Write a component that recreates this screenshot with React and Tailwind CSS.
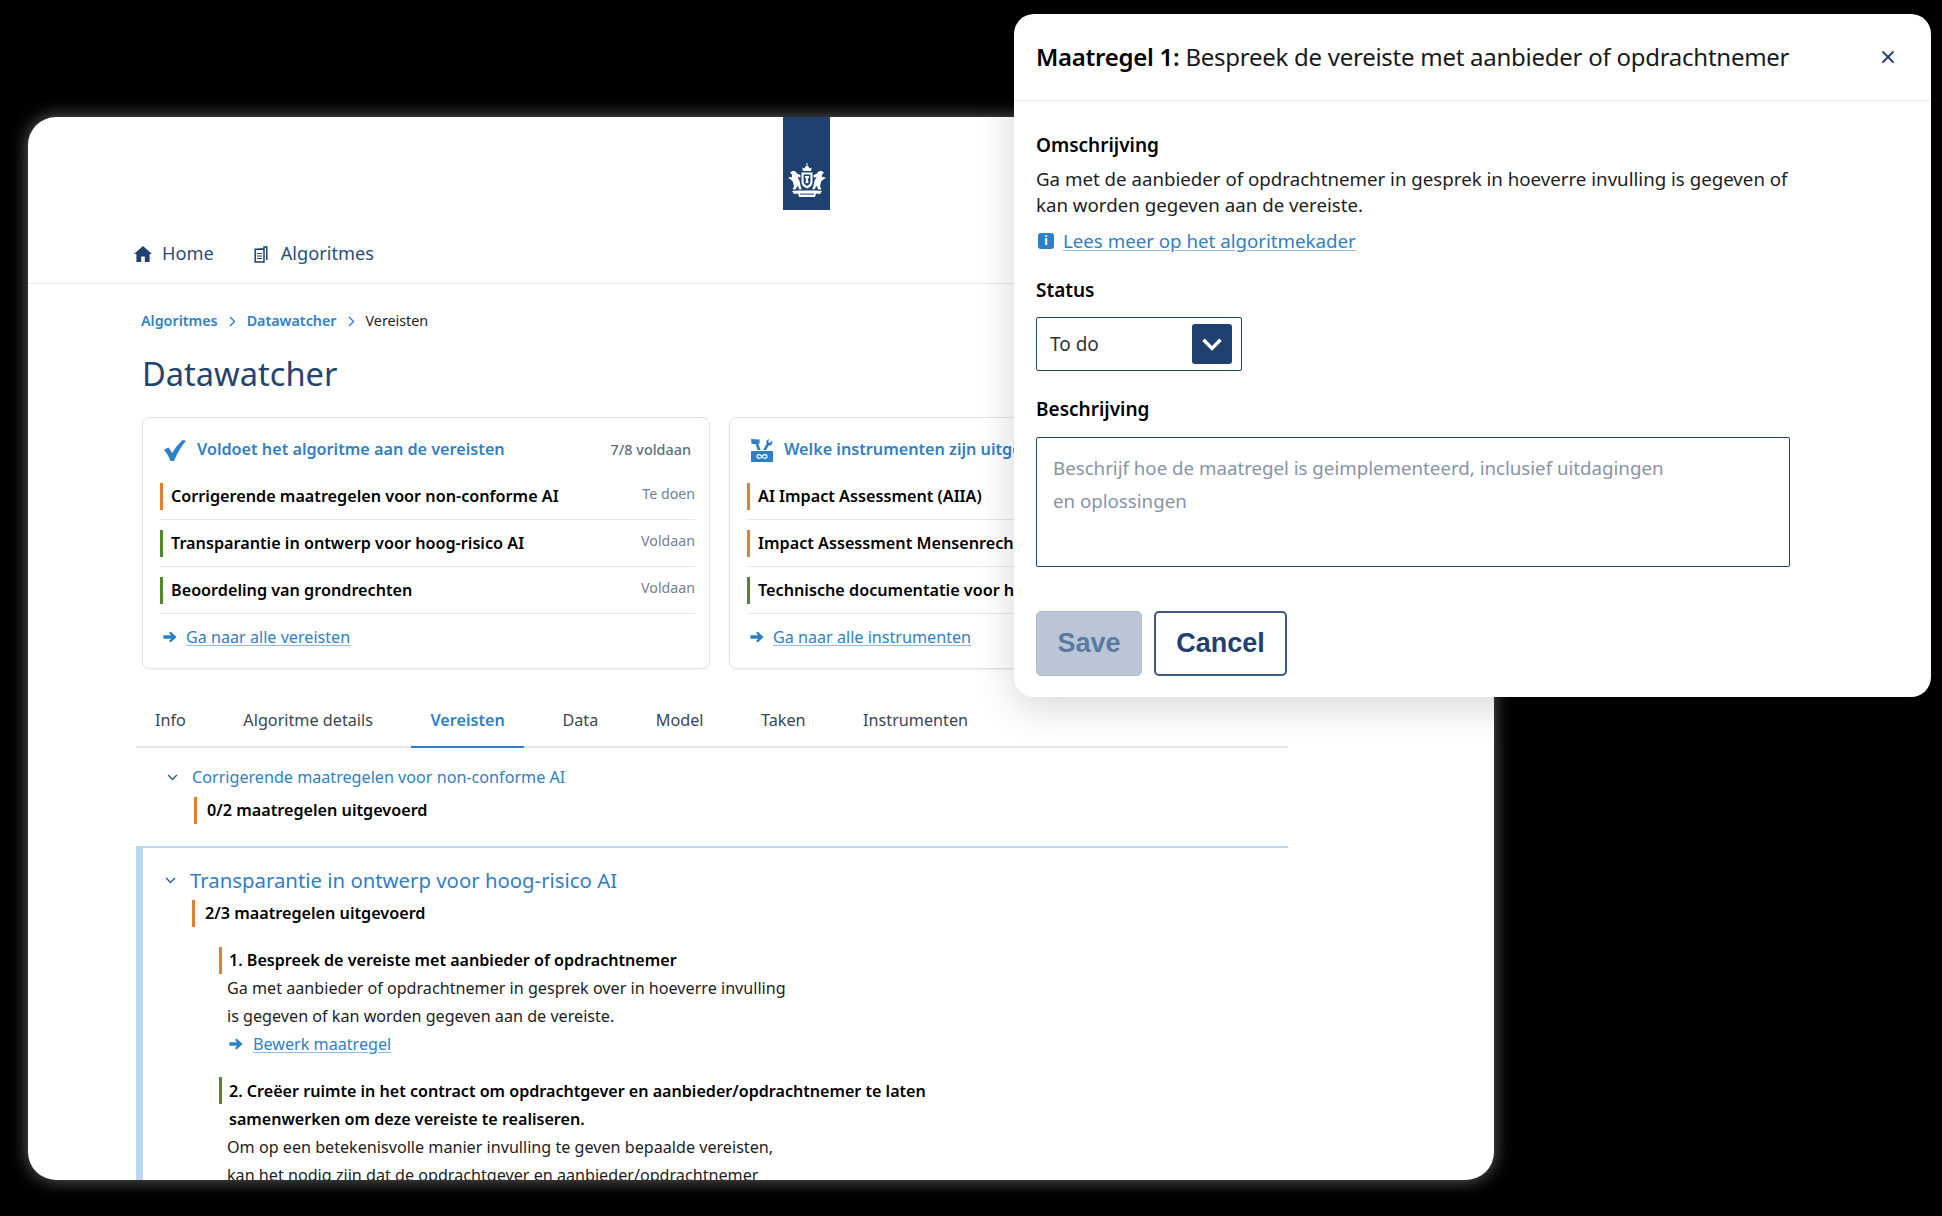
import { X } from 'lucide-react';

const navy = '#1f4170';

function Arrow({ className = '' }) {
  return (
    <svg viewBox="0 0 14 12" className={`w-[14px] h-[12px] shrink-0 ${className}`} fill="#2f7fc6">
      <path d="M7.6 0.4 L13.6 6 L7.6 11.6 L6 10 L8.2 7.8 L0.4 7.8 L0.4 4.2 L8.2 4.2 L6 2 Z" />
    </svg>
  );
}

function Chevron({ className = '' }) {
  return (
    <svg viewBox="0 0 12 8" className={`shrink-0 ${className}`} fill="none" stroke="#2a5f96" strokeWidth="1.6">
      <path d="M1 1.2 L6 6.4 L11 1.2" />
    </svg>
  );
}

function Crumb() {
  return (
    <svg viewBox="0 0 7 11" className="w-[7px] h-[11px] mx-[11px]" fill="none" stroke="#2f7fc6" strokeWidth="1.4">
      <path d="M1 1 L5.5 5.5 L1 10" />
    </svg>
  );
}

function Emblem() {
  return (
    <svg viewBox="0 0 40 35" className="w-[40px] h-[35px]" fill="#fff">
      {/* crown */}
      <path d="M16 8 L15.2 4.4 L17.2 5.4 L18.6 3.4 L20 2.4 L21.4 3.4 L22.8 5.4 L24.8 4.4 L24 8 Z" />
      <rect x="19.5" y="0" width="1" height="2.6" />
      {/* shield */}
      <path d="M14.5 9.5 H25.5 V19 Q25.5 23.5 20 25.5 Q14.5 23.5 14.5 19 Z" />
      <path d="M16.6 11.6 H23.4 V18.6 Q23.4 21.6 20 23 Q16.6 21.6 16.6 18.6 Z" fill={navy} />
      <path d="M18 13 L22 13 L22 15 L20.8 15.6 L21.6 19.4 L20 20.6 L18.4 19.4 L19.2 15.6 L18 15 Z" />
      {/* lions */}
      <path d="M3 9.5 L6 7.8 L8.5 8.6 L10 10.6 L13.4 12 L13.4 14.4 L10.6 14 L12.6 18 L13.6 23 L14.8 26 L12.4 26.6 L10.6 22.8 L8.6 26.4 L5.6 26.6 L7 23.2 L5.8 18.6 L2.6 15.6 L0.6 15.4 L3.2 13.8 L5 14.4 L5 11.8 Z" />
      <path d="M37 9.5 L34 7.8 L31.5 8.6 L30 10.6 L26.6 12 L26.6 14.4 L29.4 14 L27.4 18 L26.4 23 L25.2 26 L27.6 26.6 L29.4 22.8 L31.4 26.4 L34.4 26.6 L33 23.2 L34.2 18.6 L37.4 15.6 L39.4 15.4 L36.8 13.8 L35 14.4 L35 11.8 Z" />
      {/* ribbon */}
      <path d="M5 28 L11 27.4 L29 27.4 L35 28 L33 31 L29 30.6 L28 34 L12 34 L11 30.6 L7 31 Z" />
      <rect x="13" y="30.6" width="14" height="1" fill={navy} />
    </svg>
  );
}

function StatusRow({ bar, title, status }) {
  return (
    <div className="h-[47px] flex items-center border-b border-[#e2e7ee]">
      <span className={`w-[3px] h-[27px] shrink-0 ${bar}`} />
      <span className="ml-[8px] text-[16.2px] font-semibold text-black whitespace-nowrap">{title}</span>
      {status && <span className="ml-auto -mt-[5px] text-[14.2px] text-[#727f93]">{status}</span>}
    </div>
  );
}

function SummaryCard({ icon, title, count, rows, link }) {
  return (
    <div className="w-[568px] h-[252px] shrink-0 border border-[#dce3ea] rounded-[8px] pl-[17px] pr-[14px] pt-[20px] shadow-[0_1px_2px_rgba(31,65,112,0.08)]">
      <div className="h-[24px] flex items-center mb-[11px] whitespace-nowrap">
        <span className="w-[24px] ml-[3px] flex justify-center">{icon}</span>
        <span className="ml-[10px] -mt-[1px] text-[16.2px] font-semibold text-[#2f7fc6]">{title}</span>
        {count && <span className="ml-auto mr-[4px] text-[14.4px] font-medium text-[#5f6c80]">{count}</span>}
      </div>
      {rows.map(r => <StatusRow key={r.title} {...r} />)}
      <div className="h-[24px] mt-[11px] flex items-center">
        <Arrow className="ml-[3px]" />
        <a className="ml-[9px] text-[16.15px] text-[#2f7fc6] underline decoration-[#8fbde3] underline-offset-2">{link}</a>
      </div>
    </div>
  );
}

const tabs = ['Info', 'Algoritme details', 'Vereisten', 'Data', 'Model', 'Taken', 'Instrumenten'];

const orange = 'bg-[#df7f2f]';
const green = 'bg-[#4c8a2b]';

export default function App() {
  return (
    <div className="relative h-[1216px] bg-black overflow-hidden pt-[117px] pl-[28px] font-['Noto_Sans',sans-serif]">
      <main className="w-[1466px] h-[1063px] bg-white rounded-[28px] overflow-hidden shadow-[0_0_18px_rgba(255,255,255,0.4)]">
        <div className="ml-[755px] w-[47px] h-[93px] bg-[#1f4170] flex justify-center items-end pb-[12px]">
          <Emblem />
        </div>

        <nav className="mt-[13px] h-[61px] border-b border-[#e4e6f0] pl-[106px] pt-[2px] flex items-center text-[18.2px] text-[#2b4c7b]">
          <svg viewBox="0 0 18 16" className="w-[18px] h-[16px]" fill={navy}>
            <path d="M9 0 L18 8 L15.6 8 L15.6 16 L10.8 16 L10.8 10.5 L7.2 10.5 L7.2 16 L2.4 16 L2.4 8 L0 8 Z" />
          </svg>
          <span className="ml-[10px]">Home</span>
          <svg viewBox="0 0 14 17" className="ml-[40px] w-[14px] h-[17px]" fill="none" stroke={navy} strokeWidth="1.5">
            <path d="M4.5 3 H10 V1 H12.8 V14 M1.2 3.2 H10 V16 H1.2 Z" />
            <path d="M3 7.5 H8 M3 10 H8 M3 12.5 H8" strokeWidth="1.1" />
          </svg>
          <span className="ml-[13px]">Algoritmes</span>
        </nav>

        <div className="pl-[108px] w-[1260px]">
          <div className="pl-[5px] mt-[25px] h-[24px] flex items-center text-[14.3px]">
            <span className="font-semibold text-[#2f7fc6]">Algoritmes</span>
            <Crumb />
            <span className="font-semibold text-[#2f7fc6]">Datawatcher</span>
            <Crumb />
            <span className="text-[#222]">Vereisten</span>
          </div>

          <h1 className="pl-[6px] mt-[19px] h-[44px] leading-[44px] text-[32.6px] text-[#24446f]">Datawatcher</h1>

          <div className="pl-[6px] mt-[21px] flex gap-[19px]">
            <SummaryCard
              icon={
                <svg viewBox="0 0 22 21" className="w-[22px] h-[21px]" fill="#2f7fc6">
                  <path d="M0 9.5 L4.6 7.6 L8.2 13 Q12.4 5.4 18.6 0 L22 0.8 Q14.6 9.6 10 21 L6.6 21 Q4 14.4 0 9.5 Z" />
                </svg>
              }
              title="Voldoet het algoritme aan de vereisten"
              count="7/8 voldaan"
              rows={[
                { bar: orange, title: 'Corrigerende maatregelen voor non-conforme AI', status: 'Te doen' },
                { bar: green, title: 'Transparantie in ontwerp voor hoog-risico AI', status: 'Voldaan' },
                { bar: green, title: 'Beoordeling van grondrechten', status: 'Voldaan' },
              ]}
              link="Ga naar alle vereisten"
            />
            <SummaryCard
              icon={
                <svg viewBox="0 0 24 23" className="w-[24px] h-[23px]" fill="#2f7fc6">
                  <path d="M1 0 L9.6 0.6 L9.6 4.4 L8.2 4.4 L10.6 11 L7.6 11 L5.6 5 L1.6 5 Z" />
                  <path d="M13.2 11 L16.6 4.6 Q15.4 1.6 18 0.4 L19.4 0.2 L18 2.8 L20 4 L21.8 1.4 Q23.2 4.2 21 6 Q19.8 6.8 18.6 6.6 L16.2 11 Z" />
                  <rect x="1" y="12" width="22" height="11" rx="0.5" />
                  <path d="M12 17.5 C10.5 15 7 15 7 17.5 C7 20 10.5 20 12 17.5 C13.5 15 17 15 17 17.5 C17 20 13.5 20 12 17.5 Z" fill="none" stroke="#fff" strokeWidth="1.2" />
                </svg>
              }
              title="Welke instrumenten zijn uitgevoerd"
              rows={[
                { bar: orange, title: 'AI Impact Assessment (AIIA)' },
                { bar: orange, title: 'Impact Assessment Mensenrechten en Algoritmes' },
                { bar: green, title: 'Technische documentatie voor hoog-risico AI' },
              ]}
              link="Ga naar alle instrumenten"
            />
          </div>

          <div className="mt-[24px] w-[1152px] h-[55px] border-b-[2px] border-[#e1e6ea] flex gap-[19.5px]">
            {tabs.map(t => (
              <div
                key={t}
                className={t === 'Vereisten'
                  ? 'h-[55px] px-[19px] pt-[1px] flex items-center text-[16.2px] font-semibold text-[#2f7fc6] border-b-[2px] border-[#2f7fc6]'
                  : 'h-[53px] px-[19px] pt-[2px] flex items-center text-[16.2px] text-[#3b4654]'}
              >
                {t}
              </div>
            ))}
          </div>

          <div className="w-[1152px]">
            <div className="pl-[31px] mt-[17px] h-[24px] flex items-center">
              <Chevron className="w-[11px] h-[7px]" />
              <span className="ml-[14px] text-[16.15px] text-[#2f7fc6]">Corrigerende maatregelen voor non-conforme AI</span>
            </div>
            <div className="ml-[58px] mt-[8px] h-[27px] flex items-center">
              <span className={`w-[3px] h-[27px] ${orange}`} />
              <span className="ml-[10px] text-[16.2px] font-semibold text-black">0/2 maatregelen uitgevoerd</span>
            </div>

            <div className="mt-[22px] border-t-[2px] border-t-[#b9d6ee] border-l-[7px] border-l-[#b9d6ee] h-[340px]">
              <div className="pl-[22px] mt-[18px] h-[28px] flex items-center">
                <Chevron className="w-[11px] h-[7px]" />
                <span className="ml-[14px] text-[20.35px] text-[#2f7fc6]">Transparantie in ontwerp voor hoog-risico AI</span>
              </div>
              <div className="ml-[49px] mt-[6px] h-[27px] flex items-center">
                <span className={`w-[3px] h-[27px] ${orange}`} />
                <span className="ml-[10px] text-[16.2px] font-semibold text-black">2/3 maatregelen uitgevoerd</span>
              </div>

              <div className="ml-[76px] mt-[20px] flex text-[16.15px] leading-[28px] text-[#1d1d1d]">
                <span className={`w-[3px] h-[27px] shrink-0 ${orange}`} />
                <div className="ml-[7px]">
                  <div className="font-semibold text-[16.1px] text-black h-[27px] leading-[27px]">1. Bespreek de vereiste met aanbieder of opdrachtnemer</div>
                  <div className="-ml-[2px]">Ga met aanbieder of opdrachtnemer in gesprek over in hoeverre invulling</div>
                  <div className="-ml-[2px]">is gegeven of kan worden gegeven aan de vereiste.</div>
                  <div className="flex items-center">
                    <Arrow />
                    <a className="ml-[10px] text-[#2f7fc6] underline decoration-[#8fbde3] underline-offset-2">Bewerk maatregel</a>
                  </div>
                </div>
              </div>

              <div className="ml-[76px] mt-[19px] flex text-[16.15px] leading-[28px] text-[#1d1d1d]">
                <span className={`w-[3px] h-[27px] shrink-0 ${green}`} />
                <div className="ml-[7px]">
                  <div className="font-semibold text-[16.1px] text-black">2. Creëer ruimte in het contract om opdrachtgever en aanbieder/opdrachtnemer te laten</div>
                  <div className="font-semibold text-[16.1px] text-black">samenwerken om deze vereiste te realiseren.</div>
                  <div className="-ml-[2px]">Om op een betekenisvolle manier invulling te geven bepaalde vereisten,</div>
                  <div className="-ml-[2px]">kan het nodig zijn dat de opdrachtgever en aanbieder/opdrachtnemer</div>
                </div>
              </div>
            </div>
          </div>
        </div>
      </main>

      <section className="absolute left-[1014px] top-[14px] w-[917px] h-[683px] bg-white rounded-[20px] shadow-[0_10px_40px_rgba(0,0,0,0.16)]">
        <header className="h-[87px] border-b border-[#e2e6ee] pl-[22px] pr-[33px] flex items-center justify-between">
          <h2 className="text-[24px] tracking-[-0.26px] text-[#1a1a1a]"><span className="font-semibold text-black">Maatregel 1:</span> Bespreek de vereiste met aanbieder of opdrachtnemer</h2>
          <X className="w-[20px] h-[20px] text-[#1f4170]" strokeWidth={2.2} />
        </header>
        <div className="pl-[22px]">
          <div className="pt-[32px] h-[57px] leading-[24px] text-[19px] font-semibold text-black">Omschrijving</div>
          <p className="mt-[8px] w-[770px] text-[18.7px] leading-[26px] text-[#1d1d1d]">
            Ga met de aanbieder of opdrachtnemer in gesprek in hoeverre invulling is gegeven of kan worden gegeven aan de vereiste.
          </p>
          <div className="mt-[11px] h-[24px] flex items-center">
            <span className="ml-[2px] w-[16px] h-[16px] rounded-[3px] bg-[#2f7fc6] flex items-center justify-center text-white text-[12px] font-bold leading-none">i</span>
            <a className="ml-[9px] text-[18.7px] text-[#2f7fc6] underline decoration-[#8fbde3] underline-offset-2">Lees meer op het algoritmekader</a>
          </div>
          <div className="mt-[25px] h-[24px] leading-[24px] text-[19px] font-semibold text-black">Status</div>
          <div className="mt-[15px] w-[206px] h-[54px] border border-[#1f4170] rounded-[2px] pl-[13px] pr-[9px] flex items-center justify-between text-[19px] text-[#333]">
            To do
            <span className="w-[40px] h-[40px] rounded-[3px] bg-[#1f4170] flex items-center justify-center">
              <svg viewBox="0 0 20 13" className="w-[20px] h-[13px]" fill="none" stroke="#fff" strokeWidth="3.4">
                <path d="M1.5 1.8 L10 10.4 L18.5 1.8" />
              </svg>
            </span>
          </div>
          <div className="mt-[26px] h-[24px] leading-[24px] text-[19px] font-semibold text-black">Beschrijving</div>
          <textarea
            readOnly
            placeholder={'Beschrijf hoe de maatregel is geimplementeerd, inclusief uitdagingen\nen oplossingen'}
            className="block mt-[16px] w-[754px] h-[130px] border border-[#1f4170] rounded-[2px] pl-[16px] pr-[15px] pt-[14px] text-[18.7px] leading-[32.5px] resize-none outline-none placeholder:text-[#8793a6]"
          />
          <div className="mt-[44px] flex gap-[12px] font-['Liberation_Sans',sans-serif] text-[27px] font-bold">
            <button className="w-[106px] h-[65px] rounded-[5px] bg-[#bac6d6] border border-[#adbbcd] text-[#5b7aa3]">Save</button>
            <button className="w-[133px] h-[65px] rounded-[5px] bg-white border-2 border-[#3a5a88] text-[#1f4170]">Cancel</button>
          </div>
        </div>
      </section>
    </div>
  );
}
